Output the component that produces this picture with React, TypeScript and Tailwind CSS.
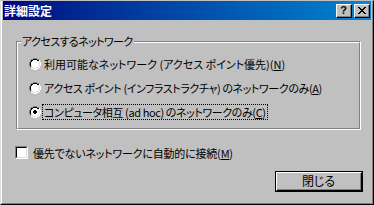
import React from "react"

const font = "[font-family:'Noto_Sans_CJK_JP','Noto_Sans',sans-serif] [font-feature-settings:'palt']"

const Radio = ({ checked }: { checked?: boolean }) => (
  <svg width="12" height="12" viewBox="0 0 12 12" shapeRendering="crispEdges" className="shrink-0">
    {/* outer ring: dark top-left, white bottom-right */}
    <path d="M4 0h4v1H4zM2 1h2v1H2zM8 1h2v1H8zM1 2h1v2H1zM0 4h1v4H0zM1 8h1v2H1z" fill="#808080" />
    <path d="M10 2h1v2h-1zM11 4h1v4h-1zM10 8h1v2h-1zM8 10h2v1H8zM4 11h4v1H4zM2 10h2v1H2z" fill="#ffffff" />
    {/* inner ring */}
    <path d="M4 1h4v1H4zM2 2h2v1H2zM8 2h2v1H8zM1 4h1v4H1zM2 3h1v1H2z" fill="#000000" />
    <path d="M9 3h1v1H9zM10 4h1v4h-1zM9 8h1v1H9zM8 9h2v1H8zM4 10h4v1H4zM2 9h2v1H2z" fill="#dfdfdf" />
    <path d="M2 4h8v4H2zM3 3h6v1H3zM3 8h6v1H3zM4 2h4v1H4zM4 9h4v1H4z" fill="#ffffff" />
    {checked && <path d="M5 4h2v1H5zM4 5h4v2H4zM5 7h2v1H5z" fill="#000000" />}
  </svg>
)

const RadioRow = ({
  children,
  checked,
  focused,
  tight,
}: {
  children: React.ReactNode
  checked?: boolean
  focused?: boolean
  tight?: boolean
}) => (
  <div className="flex items-center h-[24px] whitespace-nowrap">
    <Radio checked={checked} />
    <span
      className={`ml-[1px] px-[1px] leading-[14px] ${tight ? "tracking-[-0.4px]" : ""} ${
        focused ? "border border-dotted border-black" : "border border-transparent"
      }`}
    >
      {children}
    </span>
  </div>
)

const TitleButton = ({ children }: { children: React.ReactNode }) => (
  <div className="w-[16px] h-[14px] bg-[#c0c0c0] border-t border-l border-white border-r border-b border-r-black border-b-black flex">
    <div className="flex-1 flex items-center justify-center border-r border-b border-[#808080]">
      {children}
    </div>
  </div>
)

export default function App() {
  return (
    <div className={`w-[374px] h-[205px] bg-[#c0c0c0] text-black text-[11px] ${font}`}>
      <div className="h-full flex flex-col border-t border-t-[#c0c0c0] border-l border-l-[#dfdfdf] border-r border-r-black border-b border-b-black">
        <div className="flex-1 flex flex-col border-l border-l-white border-r border-r-[#808080] border-b border-b-[#808080] px-[1px] pb-[1px]">
          {/* title bar */}
          <div className="h-[19px] flex items-center bg-gradient-to-r from-[#000080] to-[#1084d0] pl-[1px] pr-[1px]">
            <span className="text-white font-bold text-[12px] leading-none">詳細設定</span>
            <div className="ml-auto flex gap-[2px]">
              <TitleButton>
                <span className="text-[11px] font-bold leading-none [font-family:'Liberation_Sans',sans-serif]">?</span>
              </TitleButton>
              <TitleButton>
                <svg width="8" height="7" viewBox="0 0 8 7" shapeRendering="crispEdges">
                  <path d="M0 0h2v1H0zM6 0h2v1H6zM1 1h2v1H1zM5 1h2v1H5zM2 2h4v1H2zM3 3h2v1H3zM2 4h4v1H2zM1 5h2v1H1zM5 5h2v1H5zM0 6h2v1H0zM6 6h2v1H6z" fill="#000" />
                </svg>
              </TitleButton>
            </div>
          </div>

          {/* body */}
          <div className="flex-1 flex flex-col">
            {/* group box */}
            <div className="relative mt-[21px] ml-[13px] mr-[10px] h-[89px] border-t border-l border-[#808080] border-r border-b border-r-white border-b-white">
              <div className="h-full border-t border-l border-white border-r border-b border-r-[#808080] border-b-[#808080] pt-[9px] pl-[11px]">
                <RadioRow>
                  利用可能なネットワーク (アクセス ポイント優先)(<span className="underline">N</span>)
                </RadioRow>
                <RadioRow tight>
                  アクセス ポイント (インフラストラクチャ) のネットワークのみ(<span className="underline">A</span>)
                </RadioRow>
                <RadioRow checked focused tight>
                  コンピュータ相互 (ad hoc) のネットワークのみ(<span className="underline">C</span>)
                </RadioRow>
              </div>
              <span className="absolute -top-[8px] left-[4px] px-[1px] bg-[#c0c0c0] leading-[14px] tracking-[-0.6px] whitespace-nowrap">
                アクセスするネットワーク
              </span>
            </div>

            {/* checkbox */}
            <div className="mt-[16px] ml-[12px] flex items-center h-[13px] whitespace-nowrap">
              <div className="w-[13px] h-[13px] shrink-0 border-t border-l border-[#808080] border-r border-b border-r-white border-b-white">
                <div className="w-full h-full bg-white border-t border-l border-black border-r border-b border-r-[#dfdfdf] border-b-[#dfdfdf]" />
              </div>
              <span className="ml-[5px] leading-[14px] tracking-[-0.2px]">
                優先でないネットワークに自動的に接続(<span className="underline">M</span>)
              </span>
            </div>

            {/* close button */}
            <div className="mt-[12px] flex justify-end pr-[8px]">
              <div className="w-[88px] h-[21px] border border-black">
                <div className="h-full border-t border-l border-white border-r border-b border-r-black border-b-black">
                  <div className="h-full flex items-center justify-center border-r border-b border-[#808080] bg-[#c0c0c0] text-[12px]">
                    閉じる
                  </div>
                </div>
              </div>
            </div>
          </div>
        </div>
      </div>
    </div>
  )
}
